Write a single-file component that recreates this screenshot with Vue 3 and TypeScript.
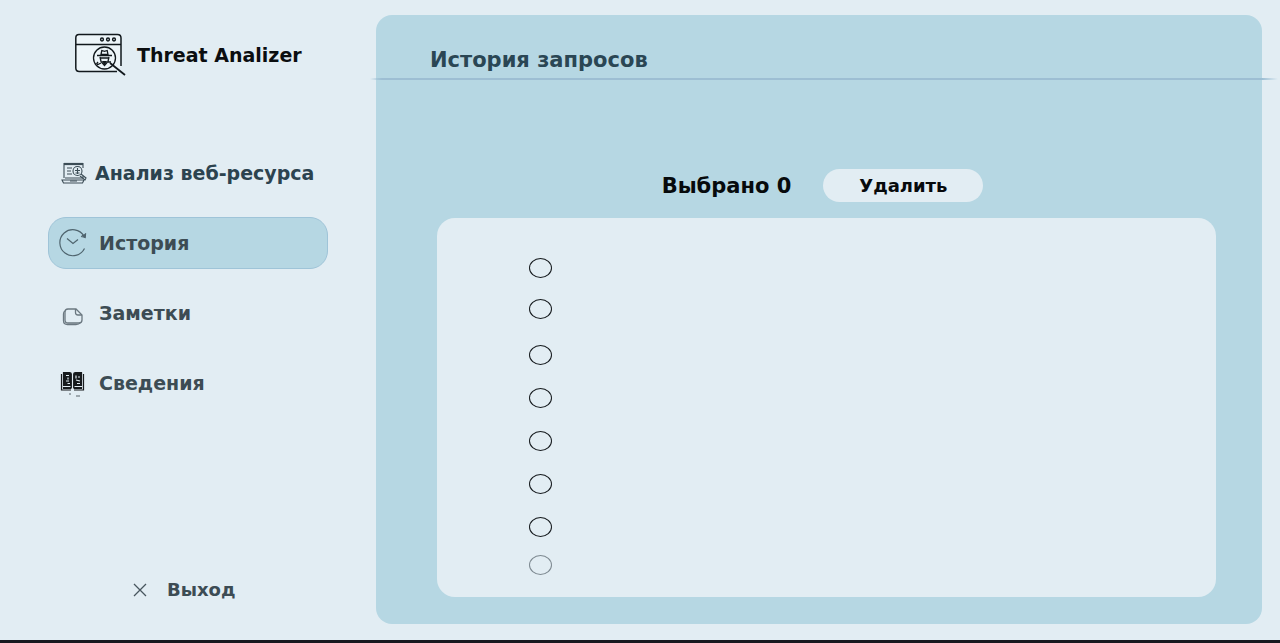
<script setup lang="ts">
import { computed, ref } from 'vue'

interface NavItem {
  id: string
  label: string
}

interface HistoryRow {
  id: number
  checked: boolean
}

const navItems: NavItem[] = [
  { id: 'analysis', label: 'Анализ веб-ресурса' },
  { id: 'history', label: 'История' },
  { id: 'notes', label: 'Заметки' },
  { id: 'info', label: 'Сведения' },
]
const active = ref('history')

const rows = ref<HistoryRow[]>(
  Array.from({ length: 8 }, (_, i) => ({ id: i + 1, checked: false })),
)
const selected = computed(() => rows.value.filter((r) => r.checked).length)

function removeSelected(): void {
  rows.value = rows.value.filter((r) => !r.checked)
}
</script>

<template>
  <div class="app">
    <aside class="sidebar">
      <div class="brand">
        <svg class="brand-icon" viewBox="0 0 52 44" fill="none" stroke="#11181c" stroke-width="1.5">
          <path d="M46 33V5q0-3.500-3.500-3.500H4Q.8 1.500.8 5v30q0 3.500 3.500 3.500H42" fill="#edf5f9" />
          <path d="M1 11.500h45" />
          <circle cx="27" cy="6.500" r="1.400" />
          <circle cx="33" cy="6.500" r="1.400" />
          <circle cx="39" cy="6.500" r="1.400" />
          <circle cx="29.500" cy="25" r="11" fill="#edf5f9" stroke-width="1.300" />
          <path d="M35 30l15 12" stroke-width="1.800" />
          <path d="M26 21.500l.8-4 2.700.8 2.700-.8.8 4z" stroke-width="1.300" />
          <path d="M22 22.500h15M25 24l1 4.500 3.500 4 3.500-4 1-4.500M25 25h9M23 29l-1.500 2M22 32l4-2M36 29h-3" stroke-width="1.300" />
          <path d="M27.500 28.500h4l-2 3z" fill="#11181c" stroke-width="1" />
        </svg>
        <span>Threat Analizer</span>
      </div>

      <nav class="nav">
        <a
          v-for="item in navItems"
          :key="item.id"
          href="#"
          class="nav-item"
          :class="[item.id, { active: active === item.id }]"
          @click.prevent="active = item.id"
        >
          <svg v-if="item.id === 'analysis'" class="icon" viewBox="0 0 28 28" fill="none" stroke="#3c4d56" stroke-width="1.100">
            <path d="M5 19V4.500h19V9M24 17v2M3 21h22l-1.500 3H4.500zM6 19h18" />
            <path d="M5 5h19" stroke-width="2.200" />
            <path d="M8 9h5M8 12h4M8 15h5M11 22h7" />
            <circle cx="18.500" cy="12" r="4.500" />
            <path d="M18.500 9v6M16 11.500h5M16.500 14h4M22 15l5 4-1 2-5-4" />
          </svg>
          <svg v-else-if="item.id === 'history'" class="icon" viewBox="0 0 28 28" fill="none" stroke="#4f646e" stroke-width="1.200">
            <path d="M25.500 19.500A13 13 0 1 1 25 7" />
            <path d="M22 7.500l4 .8.500-4" />
            <path d="M23.500 6.500l3-1-.5 3z" fill="#4f646e" />
            <path d="M8 9.500l6 5 5-4" />
          </svg>
          <svg v-else-if="item.id === 'notes'" class="icon" viewBox="0 0 28 28" fill="none" stroke="#6b7880" stroke-width="1.300">
            <path d="M9 10h8l6 6v5q0 3-3 3H9q-3 0-3-3v-8q0-3 3-3z" />
            <path d="M16.500 10v3.500q0 2.500 2.500 2.500h4" />
            <path d="M6 12q-1.500.5-1.500 3v6.500q0 4 4 4H17q3 0 4-1.500" />
          </svg>
          <svg v-else class="icon" viewBox="0 0 28 28" fill="none" stroke="#171b1d" stroke-width="1.200">
            <path d="M4.500 3.500h6q1.800 0 1.800 1.500v14H4.500zM22.500 3.500h-6Q14.700 3.500 14.700 5v14h7.800z" fill="#171b1d" />
            <path d="M2.500 5v16h9.500M24.500 5v16H15M4 19.500h8M15 19.500h8" />
            <path d="M7 6.500h3M9 8.500v2M7 12h3M8.500 14.500h2.500M17 6.500v3M19 8h2M17 11l4 1M18 14.500h3M4 17.500h7.500M15.500 17.500h7.500" stroke="#e2edf3" />
            <path d="M10 25h2M17 27h4" stroke="#59646a" />
          </svg>
          <span>{{ item.label }}</span>
        </a>
      </nav>

      <button type="button" class="exit">
        <svg class="exit-icon" viewBox="0 0 14 14" fill="none" stroke="#48565e" stroke-width="1.300">
          <path d="M1 1l12 12M13 1L1 13" />
        </svg>
        <span>Выход</span>
      </button>
    </aside>

    <main class="panel">
      <h1 class="title">История запросов</h1>
      <div class="rule"></div>

      <div class="toolbar">
        <span class="count">Выбрано {{ selected }}</span>
        <button type="button" class="delete" @click="removeSelected">Удалить</button>
      </div>

      <ul class="list">
        <li v-for="row in rows" :key="row.id">
          <input v-model="row.checked" type="checkbox" class="check" :aria-label="`Запрос ${row.id}`" />
        </li>
      </ul>
    </main>
  </div>
</template>

<style>
body {
  margin: 0;
  background: #e2edf3;
}
</style>

<style scoped>
.app {
  box-sizing: border-box;
  display: flex;
  min-height: 100vh;
  overflow: hidden;
  border-bottom: 3px solid #17181f;
  background: #e2edf3;
  color: #3d4c54;
  font-family: "DejaVu Sans", Inter, sans-serif;
  font-weight: 700;
}

.sidebar {
  box-sizing: border-box;
  display: flex;
  flex: 0 0 376px;
  flex-direction: column;
  padding: 33px 48px 40px;
}

.brand {
  display: flex;
  align-items: center;
  gap: 10px;
  margin-left: 27px;
  color: #0b0e10;
  font-size: 19px;
  white-space: nowrap;
}

.brand-icon {
  width: 52px;
  height: 44px;
}

.nav {
  display: flex;
  flex-direction: column;
  gap: 18px;
  margin-top: 70px;
}

.nav-item {
  box-sizing: border-box;
  display: flex;
  align-items: center;
  gap: 12px;
  height: 52px;
  padding: 0 10px;
  border: 1px solid transparent;
  border-radius: 18px;
  color: inherit;
  font-size: 19px;
  text-decoration: none;
  white-space: nowrap;
}

.analysis {
  gap: 8px;
  color: #2c434f;
}

.active {
  border-color: #9fc4d8;
  background: #b6d7e3;
}

.icon {
  flex: none;
  width: 28px;
  height: 28px;
}

.exit {
  display: flex;
  align-items: center;
  gap: 20px;
  margin: auto auto 0 85px;
  padding: 0;
  border: 0;
  background: none;
  color: inherit;
  font: inherit;
  font-size: 18px;
}

.exit-icon {
  width: 14px;
  height: 14px;
}

.panel {
  display: flex;
  flex: 1;
  flex-direction: column;
  margin: 15px 18px 16px 0;
  border-radius: 16px;
  background: #b6d7e3;
}

.title {
  margin: 0;
  padding: 33px 54px 5px;
  color: #2a4654;
  font-size: 21px;
  line-height: 25px;
}

.rule {
  height: 2px;
  margin: 0 -16px 0 -6px;
  background: linear-gradient(90deg, transparent, #9dbed3 12px, #9dbed3 calc(100% - 16px), transparent);
}

.toolbar {
  display: flex;
  align-items: center;
  justify-content: center;
  gap: 32px;
  margin: 89px 54px 0 61px;
  color: #070a0c;
}

.count {
  font-size: 21px;
}

.delete {
  width: 160px;
  height: 33px;
  padding: 0;
  border: 0;
  border-radius: 17px;
  background: #e2edf3;
  color: inherit;
  font: inherit;
  font-size: 18px;
}

.list {
  display: grid;
  flex: 1;
  grid-template-rows: 41px 46px repeat(4, 43px) 38px 20px;
  margin: 16px 46px 27px 61px;
  padding: 40px 92px 20px;
  border-radius: 18px;
  background: #e2edf3;
  list-style: none;
}

.list li {
  display: flex;
  align-items: flex-start;
}

.check {
  appearance: none;
  box-sizing: border-box;
  width: 23px;
  height: 20px;
  margin: 0;
  border: 1px solid #14191c;
  border-radius: 50%;
}

.check:checked {
  background: #5e8ea3;
}

.list li:last-child .check {
  border-color: #7d8990;
}
</style>
